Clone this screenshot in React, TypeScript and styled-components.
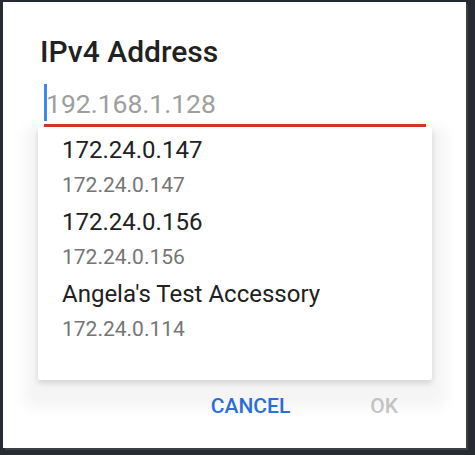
import React from "react";
import styled, { createGlobalStyle } from "styled-components";

const Global = createGlobalStyle`
  html, body { margin: 0; padding: 0; }
  body { background: #1f2731; font-family: "Roboto", "Noto Sans", sans-serif; }
`;

const Screen = styled.div`
  width: 475px;
  height: 455px;
  box-sizing: border-box;
  padding: 2px 9px 7px 3px;
  background: #262b31;
  display: flex;
`;

const Dialog = styled.div`
  flex: 1;
  background: #ffffff;
  box-shadow: 2px 2px 0 #3c3f43;
  display: flex;
  flex-direction: column;
  padding: 32px 40px 30px 41px;
  box-sizing: border-box;
`;

const Title = styled.h1`
  margin: 0 0 14px -4px;
  font-size: 30px;
  line-height: 36px;
  font-weight: 500;
  color: #212121;
  letter-spacing: 0;
`;

const Field = styled.div`
  position: relative;
  height: 40px;
  border-bottom: 3px solid #d8382a;
  display: flex;
  align-items: flex-start;
`;

const Caret = styled.span`
  position: absolute;
  left: 0;
  top: 0;
  width: 3px;
  height: 37px;
  background: #4285f4;
`;

const Placeholder = styled.span`
  margin-left: 2px;
  font-size: 26.5px;
  line-height: 40px;
  color: #9e9e9e;
`;

const Menu = styled.ul`
  position: absolute;
  top: calc(100% + 3px);
  left: -6px;
  right: -6px;
  margin: 0;
  padding: 0 0 37px;
  list-style: none;
  background: #ffffff;
  border-radius: 2px;
  box-shadow: 0 3px 6px rgba(0, 0, 0, 0.14), 0 14px 14px 14px rgba(0, 0, 0, 0.045);
  z-index: 2;
`;

const Item = styled.li`
  padding: 8px 24px 1px;
  display: flex;
  flex-direction: column;
`;

const Primary = styled.span`
  font-size: 24px;
  line-height: 30px;
  color: #212121;
`;

const Secondary = styled.span`
  margin-top: 7px;
  font-size: 21px;
  line-height: 26px;
  color: #757575;
`;

const Spacer = styled.div`
  flex: 1;
`;

const Actions = styled.div`
  display: flex;
  justify-content: flex-end;
  gap: 80px;
  padding-right: 28px;
`;

const ActionButton = styled.button<{ $disabled?: boolean }>`
  border: 0;
  background: none;
  padding: 0;
  font-family: "Roboto", sans-serif;
  font-size: 21px;
  line-height: 24px;
  font-weight: 500;
  text-transform: uppercase;
  color: ${(p) => (p.$disabled ? "#c9c9c9" : "#2b72de")};
`;

const items = [
  { name: "172.24.0.147", ip: "172.24.0.147" },
  { name: "172.24.0.156", ip: "172.24.0.156" },
  { name: "Angela's Test Accessory", ip: "172.24.0.114" },
];

export default function App() {
  return (
    <>
      <Global />
      <Screen>
        <Dialog>
          <Title>IPv4 Address</Title>
          <Field>
            <Caret />
            <Placeholder>192.168.1.128</Placeholder>
            <Menu>
              {items.map((it) => (
                <Item key={it.ip}>
                  <Primary>{it.name}</Primary>
                  <Secondary>{it.ip}</Secondary>
                </Item>
              ))}
            </Menu>
          </Field>
          <Spacer />
          <Actions>
            <ActionButton>Cancel</ActionButton>
            <ActionButton $disabled>OK</ActionButton>
          </Actions>
        </Dialog>
      </Screen>
    </>
  );
}
